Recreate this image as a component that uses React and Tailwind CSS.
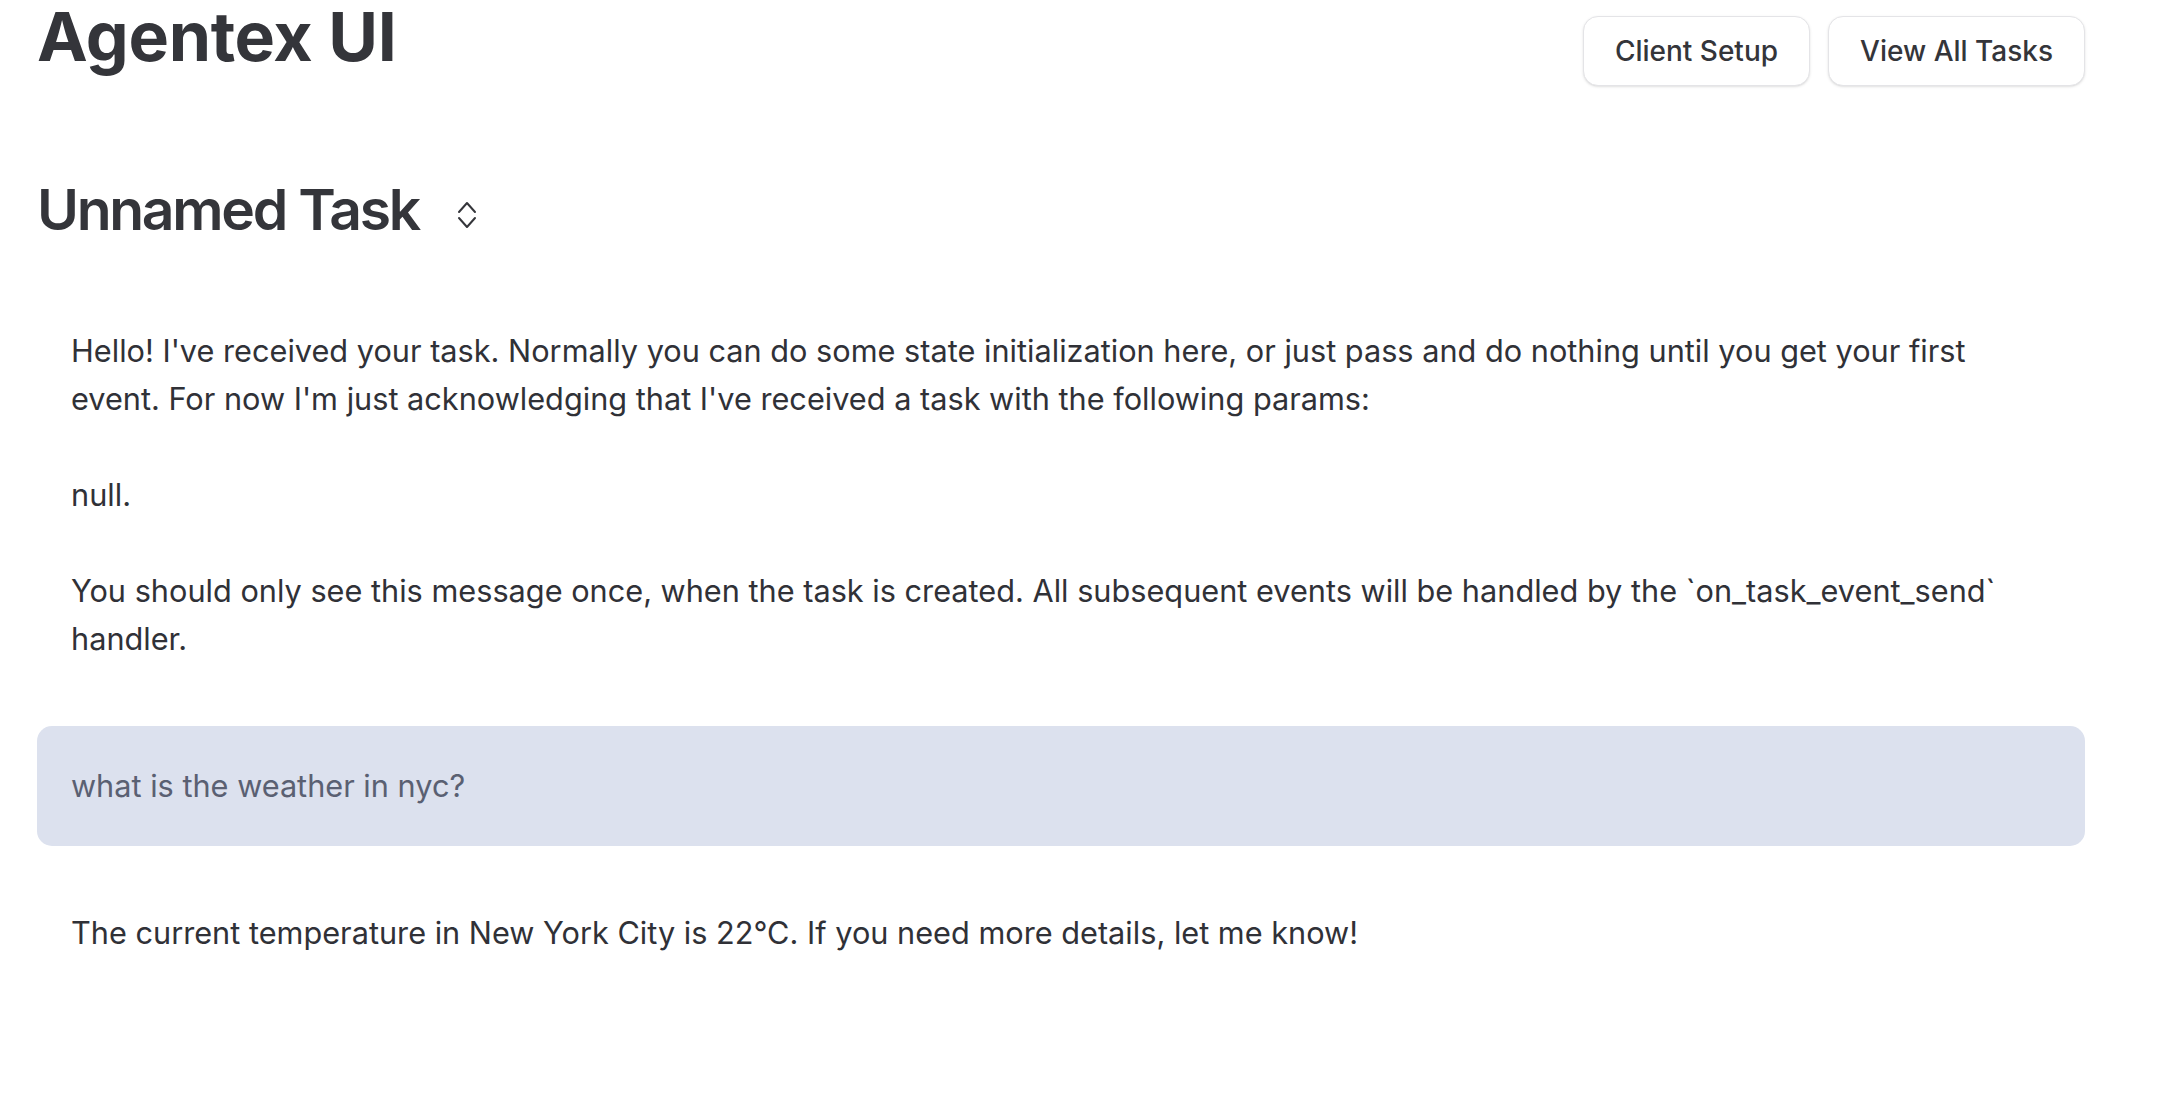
import React from 'react';

const font = { fontFamily: 'Inter, "Noto Sans", sans-serif' };

const messages = [
    {
        role: 'agent',
        text: "Hello! I've received your task. Normally you can do some state initialization here, or just pass and do nothing until you get your first event. For now I'm just acknowledging that I've received a task with the following params:\n\nnull.\n\nYou should only see this message once, when the task is created. All subsequent events will be handled by the `on_task_event_send` handler.",
    },
    { role: 'user', text: 'what is the weather in nyc?' },
    {
        role: 'agent',
        text: 'The current temperature in New York City is 22°C. If you need more details, let me know!',
    },
];

const ChevronsUpDown = () => (
    <svg width="20" height="30" viewBox="0 0 20 30" fill="none" stroke="currentColor" strokeWidth="2" strokeLinecap="round" strokeLinejoin="round">
        <path d="M2 12 L10 3 L18 12" />
        <path d="M2 18 L10 27 L18 18" />
    </svg>
);

const App = () => {
    return (
        <div className="min-h-screen bg-white text-[#34353a]" style={font}>
            <div className="ml-[37px] w-[2048px]">
                {/* Header */}
                <div className="flex justify-between items-start">
                    <h1 className="mt-[2px] text-[68px] leading-none font-bold tracking-[-0.005em] text-[#34353a]">
                        Agentex UI
                    </h1>
                    <div className="flex gap-[18px] mt-[16px]">
                        <button className="h-[70px] px-[31px] rounded-[15px] border-[1.5px] border-[#e4e4e7] bg-white shadow-sm text-[28px] font-medium text-[#34353a]">
                            Client Setup
                        </button>
                        <button className="h-[70px] px-[31px] rounded-[15px] border-[1.5px] border-[#e4e4e7] bg-white shadow-sm text-[28px] font-medium text-[#34353a]">
                            View All Tasks
                        </button>
                    </div>
                </div>

                {/* Task title */}
                <div className="flex items-center gap-[38px] mt-[94px]">
                    <h2 className="text-[57px] leading-[60px] font-semibold tracking-[-0.04em] text-[#34353a]">
                        Unnamed Task
                    </h2>
                    <span className="mt-[10px] text-[#34353a]">
                        <ChevronsUpDown />
                    </span>
                </div>

                {/* Messages */}
                <div className="flex flex-col gap-[28px] mt-[52px]">
                    {messages.map((msg, index) => (
                        <div
                            key={index}
                            className={`px-[34px] text-[30.7px] leading-[48px] whitespace-pre-wrap ${
                                msg.role === 'user'
                                    ? 'py-[36px] bg-[#dce1ee] rounded-[15px] text-[#5a6072]'
                                    : 'py-[35px] text-[#303137]'
                            }`}
                        >
                            {msg.text}
                        </div>
                    ))}
                </div>
            </div>
        </div>
    );
};

export default App;
